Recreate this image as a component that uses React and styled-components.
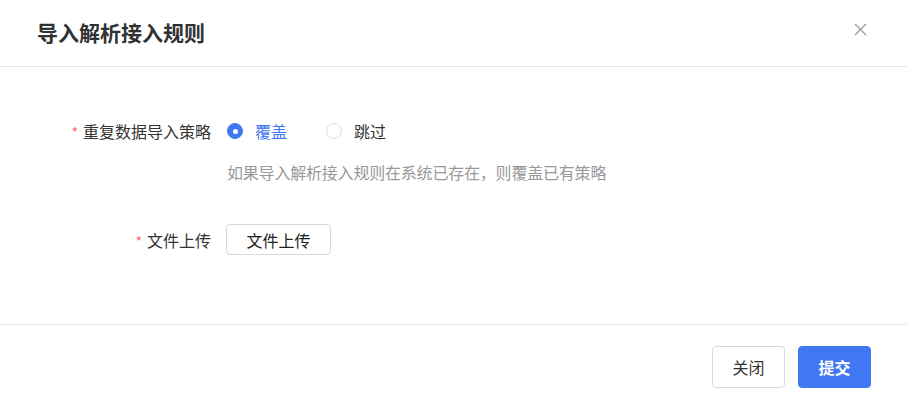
import React, { useState } from "react";
import styled, { createGlobalStyle } from "styled-components";

const Global = createGlobalStyle`
  html, body { margin: 0; padding: 0; background: #fff; }
  body { font-family: "Noto Sans CJK SC", "Noto Sans", sans-serif; color: #333; }
  * { box-sizing: border-box; }
`;

const Dialog = styled.div`
  width: 907px;
  height: 403px;
  display: flex;
  flex-direction: column;
  background: #fff;
`;

const Header = styled.div`
  height: 67px;
  display: flex;
  align-items: center;
  justify-content: space-between;
  padding: 0 37px 1px 37px;
  border-bottom: 1px solid #e6e6ee;
`;

const Title = styled.h2`
  margin: 0;
  font-size: 21px;
  font-weight: 700;
  color: #303133;
  line-height: 1;
`;

const Close = styled.button`
  border: none;
  background: none;
  padding: 0;
  width: 16px;
  height: 16px;
  margin-right: 2px;
  margin-top: -7px;
  display: flex;
  align-items: center;
  justify-content: center;
  cursor: pointer;
`;

const Body = styled.div`
  flex: 1;
  padding: 48px 0 0 0;
  display: flex;
  flex-direction: column;
  gap: 40px;
`;

const Row = styled.div`
  display: flex;
  align-items: flex-start;
`;

const Label = styled.div`
  width: 211px;
  text-align: right;
  font-size: 16px;
  line-height: 32px;
  color: #333;
  flex-shrink: 0;
`;

const Star = styled.span`
  color: #f56c6c;
  margin-right: 5px;
  font-size: 14px;
`;

const Control = styled.div`
  margin-left: 16px;
  display: flex;
  flex-direction: column;
  align-items: flex-start;
`;

const RadioGroup = styled.div`
  display: flex;
  align-items: center;
  height: 32px;
  gap: 39px;
`;

const RadioItem = styled.label`
  display: flex;
  align-items: center;
  gap: 12px;
  font-size: 16px;
  color: ${(p) => (p.$checked ? "#3f78f2" : "#333")};
  cursor: pointer;
`;

const RadioDot = styled.span`
  width: 16px;
  height: 16px;
  border-radius: 50%;
  border: 1px solid ${(p) => (p.$checked ? "#3f78f2" : "#d9dbe3")};
  background: ${(p) => (p.$checked ? "#3f78f2" : "#fff")};
  display: flex;
  align-items: center;
  justify-content: center;
  &::after {
    content: "";
    width: 5px;
    height: 5px;
    border-radius: 50%;
    background: #fff;
    display: ${(p) => (p.$checked ? "block" : "none")};
  }
`;

const Help = styled.div`
  margin-top: 13px;
  font-size: 16px;
  letter-spacing: -0.2px;
  line-height: 24px;
  color: #999;
`;

const Button = styled.button`
  font-family: inherit;
  font-size: 16px;
  font-weight: ${(p) => (p.$primary ? 700 : 400)};
  height: ${(p) => (p.$size === "lg" ? "42px" : "31px")};
  padding: 0 20px;
  border-radius: 4px;
  border: 1px solid ${(p) => (p.$primary ? "#3f78f2" : "#d9d9d9")};
  background: ${(p) => (p.$primary ? "#3f78f2" : "#fff")};
  color: ${(p) => (p.$primary ? "#fff" : "#333")};
  cursor: pointer;
  line-height: 1;
`;

const UploadButton = styled(Button)`
  width: 105px;
  padding: 0;
  margin-left: -1px;
  color: #222;
`;

const Footer = styled.div`
  height: 79px;
  border-top: 1px solid #e6e6ee;
  display: flex;
  justify-content: flex-end;
  align-items: flex-start;
  padding: 21px 36px 0 0;
  gap: 13px;
`;

const FooterButton = styled(Button)`
  width: 73px;
  padding: 0;
`;

export default function App() {
  const [mode, setMode] = useState("cover");
  return (
    <>
      <Global />
      <Dialog>
        <Header>
          <Title>导入解析接入规则</Title>
          <Close aria-label="close">
            <svg width="13" height="13" viewBox="0 0 13 13">
              <path d="M1 1L12 12M12 1L1 12" stroke="#999" strokeWidth="1.3" />
            </svg>
          </Close>
        </Header>
        <Body>
          <Row>
            <Label>
              <Star>*</Star>重复数据导入策略
            </Label>
            <Control>
              <RadioGroup>
                <RadioItem $checked={mode === "cover"} onClick={() => setMode("cover")}>
                  <RadioDot $checked={mode === "cover"} />
                  覆盖
                </RadioItem>
                <RadioItem $checked={mode === "skip"} onClick={() => setMode("skip")}>
                  <RadioDot $checked={mode === "skip"} />
                  跳过
                </RadioItem>
              </RadioGroup>
              <Help>如果导入解析接入规则在系统已存在，则覆盖已有策略</Help>
            </Control>
          </Row>
          <Row>
            <Label>
              <Star>*</Star>文件上传
            </Label>
            <Control>
              <UploadButton>文件上传</UploadButton>
            </Control>
          </Row>
        </Body>
        <Footer>
          <FooterButton $size="lg">关闭</FooterButton>
          <FooterButton $size="lg" $primary>提交</FooterButton>
        </Footer>
      </Dialog>
    </>
  );
}
